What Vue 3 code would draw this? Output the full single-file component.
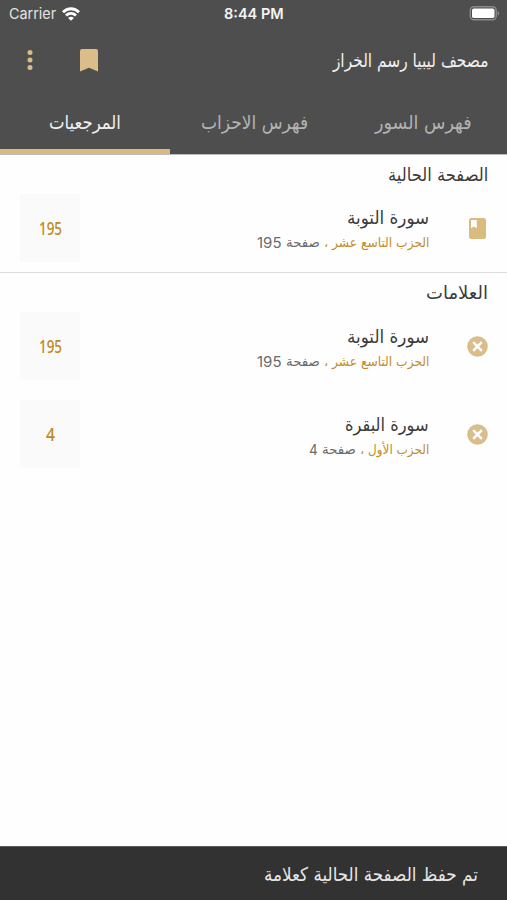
<script setup>
const tabs = [
  { label: 'فهرس السور', width: 97, active: false },
  { label: 'فهرس الاحزاب', width: 107, active: false },
  { label: 'المرجعيات', width: 72, active: true },
]

const sections = [
  {
    title: 'الصفحة الحالية',
    width: 100,
    items: [
      { icon: 'book', name: 'سورة التوبة', nameW: 82, hizb: 'الحزب التاسع عشر', hizbW: 97, page: '195', pageW: 25, badgeW: 23 },
    ],
  },
  {
    title: 'العلامات',
    width: 62,
    items: [
      { icon: 'remove', name: 'سورة التوبة', nameW: 82, hizb: 'الحزب التاسع عشر', hizbW: 97, page: '195', pageW: 25, badgeW: 23 },
      { icon: 'remove', name: 'سورة البقرة', nameW: 84, hizb: 'الحزب الأول', hizbW: 61, page: '4', pageW: 9, badgeW: 9 },
    ],
  },
]

// Condenses a text run so that it fills the width of its slot.
const vFit = {
  mounted(el, { value }) {
    const inner = el.firstElementChild
    el.style.width = `${value}px`
    inner.style.transform = `scaleX(${value / inner.offsetWidth})`
  },
}
</script>

<template>
  <div class="screen" dir="rtl">
    <header class="header">
      <div class="status" dir="ltr">
        <div class="carrier">
          <span v-fit="47" class="fit"><span>Carrier</span></span>
          <svg width="18" height="14" viewBox="0 0 18 14" fill="none" stroke="#fff" stroke-width="2.8">
            <path d="M1 5.2C5.6.6 12.4.6 17 5.2" />
            <path d="M4 8.5c3-2.8 7-2.8 10 0" />
            <path d="M9 13.7 6.1 10.9c1.7-1.5 4.1-1.5 5.8 0z" fill="#fff" stroke="none" />
          </svg>
        </div>
        <div class="clock"><span v-fit="60" class="fit"><span>8:44 PM</span></span></div>
        <svg class="battery" width="31" height="15" viewBox="0 0 31 15">
          <rect x="1.25" y=".75" width="26" height="13" rx="3.7" fill="#4e4e4e" stroke="#8a8a8a" stroke-width="1.4" />
          <rect x="3" y="2.5" width="22.5" height="9.5" rx="1.8" fill="#fff" />
          <path d="M28.6 5v4.6c2.2-.8 2.2-3.8 0-4.6z" fill="#8a8a8a" />
        </svg>
      </div>
      <div class="appbar">
        <h1 class="title"><span v-fit="156" class="fit"><span>مصحف ليبيا رسم الخراز</span></span></h1>
        <svg class="bookmark" width="18" height="23" viewBox="0 0 18 23" fill="#dabd88">
          <path d="M2 0h14a2 2 0 0 1 2 2v20.6l-9-3.8-9 3.8V2a2 2 0 0 1 2-2z" />
        </svg>
        <svg class="more" width="6" height="20" viewBox="0 0 6 20" fill="#dabd88">
          <circle cx="3" cy="2.6" r="2.5" /><circle cx="3" cy="10" r="2.5" /><circle cx="3" cy="17.4" r="2.5" />
        </svg>
      </div>
      <nav class="tabs">
        <div v-for="t in tabs" :key="t.label" class="tab" :class="{ active: t.active }">
          <span v-fit="t.width" class="fit"><span>{{ t.label }}</span></span>
        </div>
      </nav>
    </header>

    <main class="content">
      <section v-for="s in sections" :key="s.title" class="section">
        <h2 class="heading"><span v-fit="s.width" class="fit"><span>{{ s.title }}</span></span></h2>
        <article v-for="i in s.items" :key="i.name" class="row">
          <div class="icon">
            <svg v-if="i.icon === 'book'" width="17" height="21" viewBox="0 0 17 21">
              <rect width="17" height="21" rx="2.2" fill="#dabb80" />
              <path d="M2 2h5.8v8.3l-2.9-1.8L2 10.3z" fill="#fff" />
            </svg>
            <svg v-else width="21" height="21" viewBox="0 0 21 21">
              <circle cx="10.5" cy="10.5" r="10.3" fill="#d9be8b" />
              <path d="m6.2 6.2 8.6 8.6m0-8.6-8.6 8.6" stroke="#fff" stroke-width="2.5" />
            </svg>
          </div>
          <div class="info">
            <div class="name"><span v-fit="i.nameW" class="fit"><span>{{ i.name }}</span></span></div>
            <div class="meta">
              <span v-fit="i.hizbW" class="fit gold"><span>{{ i.hizb }}</span></span>
              <span class="comma gold">،</span>
              <span v-fit="34" class="fit"><span>صفحة</span></span>
              <span v-fit="i.pageW" class="fit page" dir="ltr"><span>{{ i.page }}</span></span>
            </div>
          </div>
          <div class="badge" dir="ltr"><span v-fit="i.badgeW" class="fit"><span>{{ i.page }}</span></span></div>
        </article>
      </section>
    </main>

    <footer class="toast"><span v-fit="214" class="fit"><span>تم حفظ الصفحة الحالية كعلامة</span></span></footer>
  </div>
</template>

<style>
body { margin: 0; background: #fff; }
</style>

<style scoped>
.screen {
  display: flex;
  flex-direction: column;
  width: 507px;
  height: 900px;
  overflow: hidden;
  background: #fefefe;
  color: #3b3b3b;
  font-family: "DejaVu Sans", sans-serif;
}
.fit { display: inline-flex; flex: none; white-space: nowrap; }
.fit > span { flex: none; transform-origin: right center; }
[dir="ltr"] .fit > span, .fit[dir="ltr"] > span { transform-origin: left center; }
h1, h2 { margin: 0; font-weight: 400; }

.header { flex: none; height: 155px; box-sizing: border-box; background: #4e4e4e; border-bottom: 1px solid #bcbcbc; }
.status {
  display: grid;
  grid-template-columns: 1fr auto 1fr;
  align-items: center;
  height: 27px;
  padding: 0 7px 0 7px;
  color: #f4f4f4;
  font: 15px Inter, sans-serif;
}
.carrier { display: flex; align-items: center; gap: 6px; padding-left: 2px; color: #e4e4e4; }
.clock { font-weight: 600; }
.battery { justify-self: end; }
.appbar { display: flex; align-items: center; height: 66px; padding: 0 19px 0 27px; }
.title { flex: 1; color: #f0f0f0; font-size: 19px; line-height: 24px; }
.bookmark { margin-left: 47px; margin-right: 3px; }
.bookmark + .more { margin-right: 0; }
.tabs { display: grid; grid-template-columns: 168px 169px 170px; height: 61px; }
.tab {
  display: flex;
  justify-content: center;
  box-sizing: border-box;
  padding-top: 17px;
  color: #b3b3b3;
  font-size: 19px;
  line-height: 25px;
  border-bottom: 5px solid transparent;
}
.tab.active { color: #f0f0f0; border-bottom-color: #d9ba7e; }

.content { flex: 1; }
.section + .section { border-top: 1px solid #dcdcdc; }
.heading { height: 39px; padding: 8px 19px 0 0; box-sizing: border-box; font-size: 18px; line-height: 24px; }
.row { display: flex; height: 68px; margin-bottom: 20px; padding: 0 19px 0 20px; }
.section:first-child .row { margin-bottom: 10px; }
.icon { display: flex; align-items: center; justify-content: center; width: 21px; }
.info { flex: 1; padding: 12px 38px 0 0; }
.section + .section .info { padding-top: 13px; }
.name { height: 26px; font-size: 18px; line-height: 24px; }
.meta { display: flex; height: 22px; color: #6b6b6b; font-size: 13px; line-height: 22px; }
.gold { color: #c28d28; }
.comma { width: 12px; text-align: center; }
.page { margin-right: 4px; font-family: Inter, sans-serif; font-size: 15px; }
.badge {
  display: flex;
  align-items: center;
  justify-content: center;
  width: 60px;
  background: #fafafa;
  color: #bd8a24;
  font: 500 17.5px "Noto Sans", sans-serif;
}
.toast {
  display: flex;
  align-items: center;
  flex: none;
  height: 54px;
  box-sizing: border-box;
  padding-right: 29px;
  background: #323232;
  border-top: 1px solid #5c5c5c;
  color: #e6e6e6;
  font-size: 19px;
}
</style>
